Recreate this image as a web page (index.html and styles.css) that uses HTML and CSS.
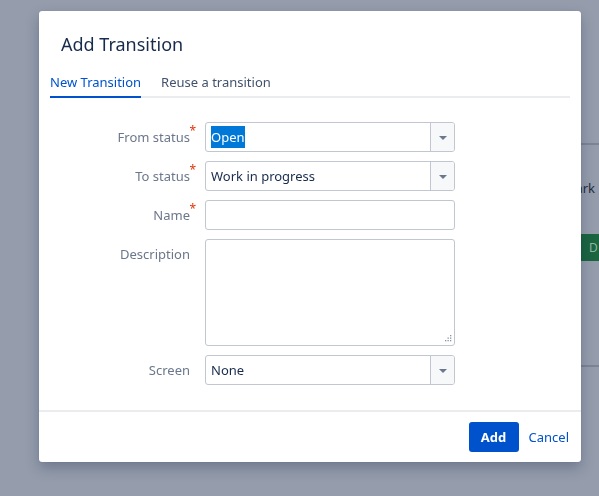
FILE: index.html
```html
<!DOCTYPE html>
<html>
<head>
<meta charset="utf-8">
<link rel="stylesheet" href="styles.css">
</head>
<body>
<div class="page">
  <div class="board">
    <div class="board-col">
      <div class="col-top"></div>
      <div class="card-text">Mark</div>
      <div class="done-btn">D</div>
      <div class="col-bottom"></div>
    </div>
  </div>
</div>

<div class="dialog">
  <div class="dialog-header">
    <h2 class="dialog-title">Add Transition</h2>
  </div>
  <div class="tabs">
    <div class="tab active">New Transition</div>
    <div class="tab">Reuse a transition</div>
  </div>
  <form class="form">
    <div class="row">
      <label class="label required">From status<span class="req">*</span></label>
      <div class="select">
        <div class="select-value"><span class="sel">Open</span></div>
        <div class="select-arrow"><span class="tri"></span></div>
      </div>
    </div>
    <div class="row">
      <label class="label required">To status<span class="req">*</span></label>
      <div class="select">
        <div class="select-value">Work in progress</div>
        <div class="select-arrow"><span class="tri"></span></div>
      </div>
    </div>
    <div class="row">
      <label class="label required">Name<span class="req">*</span></label>
      <div class="text-input"></div>
    </div>
    <div class="row">
      <label class="label">Description</label>
      <div class="textarea">
        <svg class="grip" width="9" height="9" viewBox="0 0 9 9">
          <rect x="7" y="1" width="1.3" height="1.3" fill="#8993a4"/>
          <rect x="4.5" y="3.5" width="1.3" height="1.3" fill="#8993a4"/>
          <rect x="7" y="3.5" width="1.3" height="1.3" fill="#8993a4"/>
          <rect x="2" y="6" width="1.3" height="1.3" fill="#8993a4"/>
          <rect x="4.5" y="6" width="1.3" height="1.3" fill="#8993a4"/>
          <rect x="7" y="6" width="1.3" height="1.3" fill="#8993a4"/>
        </svg>
      </div>
    </div>
    <div class="row">
      <label class="label">Screen</label>
      <div class="select">
        <div class="select-value">None</div>
        <div class="select-arrow"><span class="tri"></span></div>
      </div>
    </div>
  </form>
  <div class="footer">
    <button class="btn-add" type="button">Add</button>
    <a class="cancel" href="#">Cancel</a>
  </div>
</div>
</body>
</html>
```

FILE: styles.css
```css
* { box-sizing: border-box; }
html, body {
  margin: 0;
  padding: 0;
  height: 100%;
}
body {
  background: #959dac;
  font-family: "Segoe UI", "Noto Sans", "Open Sans", sans-serif;
  font-size: 13px;
  color: #172b4d;
  overflow: hidden;
}
.page {
  height: 100%;
  display: flex;
  justify-content: flex-end;
}
.board {
  width: 60px;
  padding-top: 143px;
}
.board-col {
  display: flex;
  flex-direction: column;
}
.col-top {
  height: 2px;
  background: #7d8595;
}
.card-text {
  margin-top: 33px;
  text-align: right;
  padding-right: 4px;
  color: #252d3c;
  font-size: 13px;
  line-height: 20px;
}
.done-btn {
  margin-top: 36px;
  height: 27px;
  background: #1b6540;
  color: #8fb6a2;
  line-height: 27px;
  padding-left: 50px;
  font-size: 12px;
}
.col-bottom {
  margin-top: 104px;
  height: 2px;
  background: #7d8595;
}

.dialog {
  position: fixed;
  left: 39px;
  top: 11px;
  width: 542px;
  height: 451px;
  background: #fff;
  border-radius: 3px;
  box-shadow: 0 6px 14px rgba(9, 30, 66, 0.28), 0 0 1px rgba(9, 30, 66, 0.3);
  display: flex;
  flex-direction: column;
}
.dialog-header {
  padding: 21px 0 0 22px;
}
.dialog-title {
  margin: 0;
  font-size: 18px;
  font-weight: 400;
  line-height: 24px;
  color: #172b4d;
}
.tabs {
  margin: 14px 11px 0 11px;
  display: flex;
  gap: 20px;
  border-bottom: 2px solid #ebecf0;
}
.tab {
  color: #42526e;
  line-height: 20px;
  padding: 2px 0 4px 0;
  margin-bottom: -2px;
  border-bottom: 2px solid transparent;
}
.tab.active {
  color: #0052cc;
  border-bottom-color: #0052cc;
}
.form {
  margin: 24px 0 0 0;
  display: flex;
  flex-direction: column;
  gap: 9px;
}
.row {
  display: grid;
  grid-template-columns: 151px 250px;
  column-gap: 15px;
  align-items: start;
}
.label {
  text-align: right;
  color: #6b778c;
  line-height: 20px;
  padding-top: 5px;
  position: relative;
}
.req {
  position: absolute;
  right: -6px;
  top: 3px;
  color: #de350b;
  font-size: 12px;
  line-height: 12px;
}
.select {
  height: 30px;
  border: 1px solid #c1c7d0;
  border-radius: 3px;
  display: flex;
  background: #fff;
}
.select-value {
  flex: 1;
  padding-left: 5px;
  line-height: 28px;
  color: #172b4d;
}
.sel {
  background: #0078d7;
  color: #fff;
  padding: 2px 0;
}
.select-arrow {
  width: 24px;
  border-left: 1px solid #c1c7d0;
  background: #f7f8f9;
  border-radius: 0 2px 2px 0;
  display: flex;
  align-items: center;
  justify-content: center;
}
.tri {
  width: 0;
  height: 0;
  border-left: 4px solid transparent;
  border-right: 4px solid transparent;
  border-top: 4px solid #6b778c;
  margin-top: 1px;
}
.text-input {
  height: 30px;
  border: 1px solid #c1c7d0;
  border-radius: 3px;
}
.textarea {
  height: 107px;
  border: 1px solid #c1c7d0;
  border-radius: 3px;
  position: relative;
}
.grip {
  position: absolute;
  right: 2px;
  bottom: 2px;
}
.footer {
  margin-top: auto;
  border-top: 2px solid #ebecf0;
  height: 52px;
  display: flex;
  justify-content: flex-end;
  align-items: center;
  gap: 10px;
  padding-right: 12px;
}
.btn-add {
  width: 50px;
  height: 30px;
  background: #0052cc;
  color: #fff;
  border: none;
  border-radius: 3px;
  font-family: inherit;
  font-size: 13px;
  font-weight: 700;
}
.cancel {
  color: #0052cc;
  text-decoration: none;
  font-size: 13px;
}
```
